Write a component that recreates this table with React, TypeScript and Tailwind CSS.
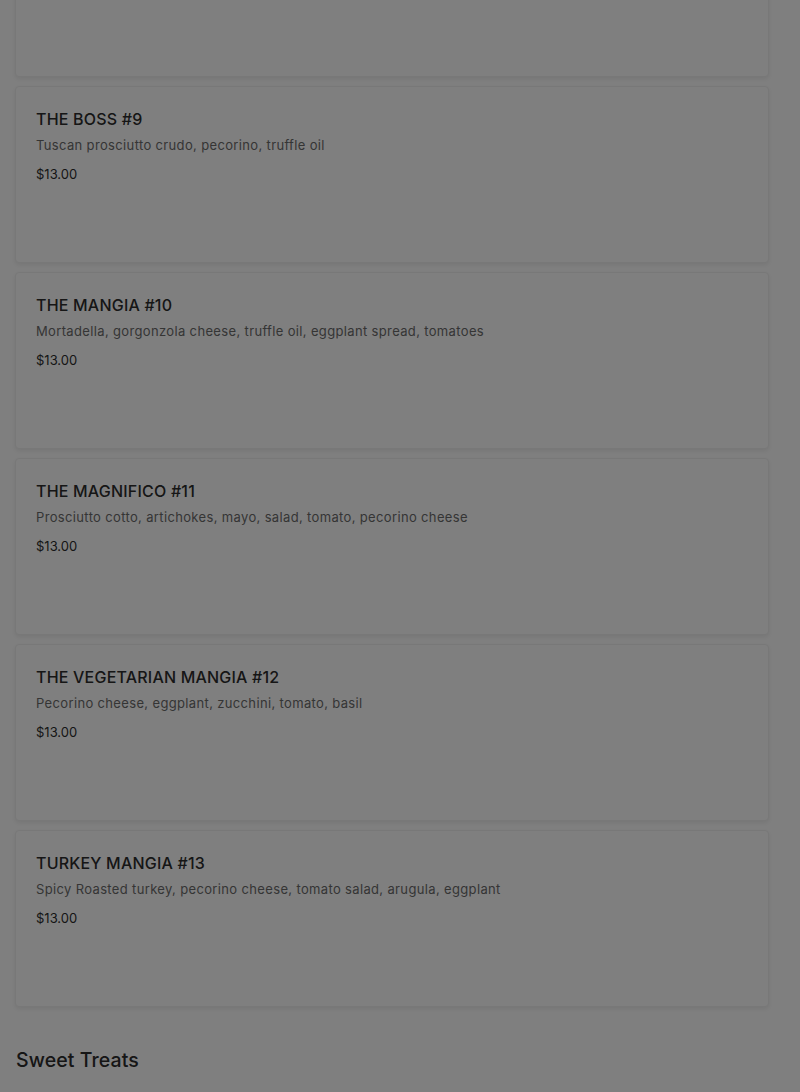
import React from "react";

type Item = { name: string; desc: string; price: string };

const ITEMS: Item[] = [
  { name: "THE BOSS #9", desc: "Tuscan prosciutto crudo, pecorino, truffle oil", price: "$13.00" },
  { name: "THE MANGIA #10", desc: "Mortadella, gorgonzola cheese, truffle oil, eggplant spread, tomatoes", price: "$13.00" },
  { name: "THE MAGNIFICO #11", desc: "Prosciutto cotto, artichokes, mayo, salad, tomato, pecorino cheese", price: "$13.00" },
  { name: "THE VEGETARIAN MANGIA #12", desc: "Pecorino cheese, eggplant, zucchini, tomato, basil", price: "$13.00" },
  { name: "TURKEY MANGIA #13", desc: "Spicy Roasted turkey, pecorino cheese, tomato salad, arugula, eggplant", price: "$13.00" },
];

function MenuCard({ item }: { item?: Item }) {
  return (
    <div className="h-[177px] w-[754px] rounded-[4px] border border-[#f0f0f0] bg-white px-5 pt-[21px] shadow-[0_2px_5px_rgba(0,0,0,0.08)]">
      {item && (
        <>
          <h3 className="text-[16px] font-medium leading-[22px] tracking-[0.2px] text-[#2d2d2d]">{item.name}</h3>
          <p className="mt-[5px] text-[13px] leading-[20px] tracking-[0.35px] text-[#6b6b6b]">{item.desc}</p>
          <p className="mt-[9px] text-[13px] leading-[20px] text-[#2d2d2d]">{item.price}</p>
        </>
      )}
    </div>
  );
}

export default function App() {
  return (
    <div className="relative min-h-screen overflow-hidden bg-white" style={{ fontFamily: "Inter, 'Noto Sans', sans-serif" }}>
      <main className="flex flex-col gap-[9px] pl-[15px]">
        <div className="-mt-[100px]">
          <MenuCard />
        </div>
        {ITEMS.map((it) => (
          <MenuCard key={it.name} item={it} />
        ))}
        <h2 className="mt-[30px] pl-px text-[19.5px] font-medium tracking-[0.1px] text-[#2d2d2d]">Sweet Treats</h2>
      </main>

      {/* modal backdrop */}
      <div className="fixed inset-0 bg-black/50" />
    </div>
  );
}
